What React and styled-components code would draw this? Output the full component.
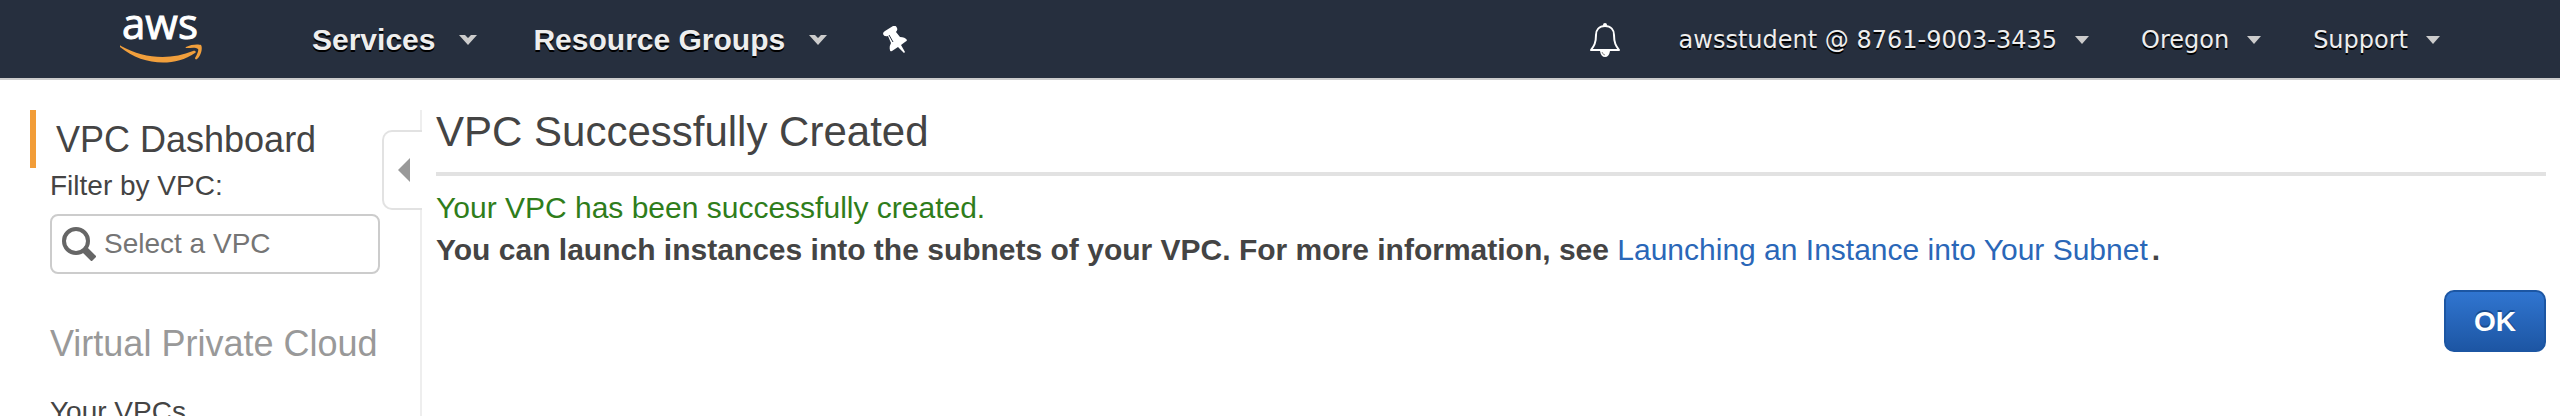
import React from "react";
import styled, { createGlobalStyle } from "styled-components";

const GlobalStyle = createGlobalStyle`
  * { box-sizing: border-box; }
  body {
    margin: 0;
    background: #fff;
    color: #444;
    font-family: "Liberation Sans", Arial, sans-serif;
    font-size: 28px;
    line-height: 36px;
  }
  button, input { font: inherit; color: inherit; }
`;

const Page = styled.div`
  height: 100vh;
  overflow: hidden;
  display: flex;
  flex-direction: column;
`;

const Header = styled.header`
  flex: none;
  display: flex;
  align-items: center;
  justify-content: space-between;
  height: 80px;
  padding: 2px 120px 0;
  background: #262f3e;
  border-bottom: 2px solid #ccc;
`;

const Nav = styled.nav`
  display: flex;
  align-items: center;
`;

const HomeLink = styled.a`
  display: flex;
  margin-right: 108px;
`;

const MenuButton = styled.button`
  display: flex;
  align-items: center;
  gap: ${(p) => (p.$primary ? "24px" : "18px")};
  margin-right: ${(p) => (p.$primary ? "56px" : "0")};
  padding: 0;
  border: 0;
  background: none;
  color: #eee;
  text-shadow: 0 2px 0 #000;
  white-space: nowrap;
  font-family: ${(p) => (p.$primary ? "inherit" : '"DejaVu Sans", Verdana, sans-serif')};
  font-size: ${(p) => (p.$primary ? "30px" : "24px")};
  font-weight: ${(p) => (p.$primary ? "bold" : "normal")};
`;

const Account = styled(Nav)`
  gap: 52px;
`;

const IconButton = styled.button`
  display: flex;
  padding: 0;
  border: 0;
  background: none;
`;

const BellButton = styled(IconButton)`
  margin-right: 6px;
`;

const Body = styled.div`
  flex: 1 0 auto;
  display: flex;
  padding: 30px 14px 0 30px;
`;

const Sidebar = styled.aside`
  flex: none;
  width: 352px;
`;

const DashboardLink = styled.a`
  display: block;
  border-left: 6px solid #f29d38;
  padding: 2px 0 0 20px;
  color: inherit;
  font-size: 36px;
  line-height: 56px;
  text-decoration: none;
`;

const SideGroup = styled.div`
  padding-left: 20px;
`;

const FilterLabel = styled.label`
  display: block;
`;

const SearchBox = styled.div`
  display: flex;
  align-items: center;
  gap: 8px;
  width: 330px;
  height: 60px;
  margin-top: 10px;
  padding: 0 10px;
  border: 2px solid #ccc;
  border-radius: 8px;
`;

const SearchInput = styled.input`
  flex: 1;
  min-width: 0;
  padding: 0;
  border: 0;
  outline: 0;
  background: none;
  &::placeholder { color: #757575; opacity: 1; }
`;

const SectionTitle = styled.h2`
  margin: 48px 0 28px;
  color: #999;
  font-size: 36px;
  font-weight: normal;
  line-height: 44px;
  white-space: nowrap;
`;

const SideLink = styled.a`
  display: block;
  color: inherit;
  text-decoration: none;
`;

const Divider = styled.div`
  flex: none;
  display: flex;
  flex-direction: column;
  align-items: flex-end;
  width: 40px;
  &::before, &::after {
    content: "";
    width: 2px;
    background: #eee;
  }
  &::before { height: 20px; }
  &::after { flex: 1; }
`;

const CollapseButton = styled.button`
  display: flex;
  align-items: center;
  width: 40px;
  height: 80px;
  padding: 0 0 0 14px;
  border: 2px solid #e2e2e2;
  border-right: 0;
  border-radius: 10px 0 0 10px;
  background: #fff;
`;

const Main = styled.main`
  flex: 1;
  min-width: 0;
  margin-left: 14px;
  font-size: 30px;
  line-height: 42px;
`;

const Title = styled.h1`
  margin: 0 0 11px;
  padding-bottom: 18px;
  border-bottom: 4px solid #e2e2e2;
  font-size: 42px;
  font-weight: normal;
  line-height: 44px;
`;

const Message = styled.p`
  margin: 0;
  color: ${(p) => (p.$success ? "#2f7d1b" : "inherit")};
  font-weight: ${(p) => (p.$success ? "normal" : "bold")};
`;

const DocLink = styled.a`
  padding-right: 4px;
  color: #2a67b8;
  font-weight: normal;
  text-decoration: none;
`;

const Actions = styled.div`
  display: flex;
  justify-content: flex-end;
  margin-top: 19px;
`;

const PrimaryButton = styled.button`
  width: 102px;
  height: 62px;
  padding: 2px 0 0;
  border: 2px solid #1c56a3;
  border-radius: 10px;
  background: linear-gradient(#3075d0, #1d56a4);
  color: #fff;
  font-size: 28px;
  font-weight: bold;
  text-shadow: 0 -2px 0 #194b8f;
`;

const AwsLogo = () => (
  <svg width="84" height="76" viewBox="0 0 84 76" role="img" aria-label="AWS">
    <text x="2" y="37" fill="#fff" stroke="#fff" strokeWidth="1" fontFamily="Open Sans, sans-serif" fontSize="42" fontWeight="500">aws</text>
    <g fill="#f19f3c" transform="translate(0 11)">
      <path d="M1 33C24 46 51 47 73 38C75 37 77 39 75 40C53 55 22 52 0 34C-1 33 0 32 1 33Z" />
      <path d="M66 34C71 31 79 31 81 32C83 35 81 43 77 46C76 47 75 46 75 45C77 42 79 37 78 36C76 34 71 35 67 35C66 35 65 35 66 34Z" />
    </g>
  </svg>
);

const Caret = ({ small }) => (
  <svg width={small ? 14 : 18} height={small ? 8 : 10} viewBox="0 0 18 10" preserveAspectRatio="none" aria-hidden="true">
    <path fill="#ccc" d="M0 0H6L9 3L12 0H18L9 10Z" />
    {small && <path fill="#ccc" d="M5 0H13L9 5Z" />}
  </svg>
);

const Pin = () => (
  <svg width="26" height="28" viewBox="0 0 26 28" aria-hidden="true">
    <path fill="#fff" d="M0 8Q0 6 2 5L10 0Q13 -1 14 2Q15 4 13 6L17 11Q22 11 24 14Q24 15 22 16L18 19L22 26L21 27L15 21L9 25Q7 26 7 24Q6 21 8 17L5 10Q1 11 0 8Z" />
    <path stroke="#262f3e" strokeWidth="1" d="M6 9L10 16" />
  </svg>
);

const Bell = () => (
  <svg width="32" height="34" viewBox="0 0 32 34" fill="none" aria-hidden="true">
    <circle cx="16" cy="2" r="2" fill="#fff" />
    <path stroke="#fff" strokeWidth="2" strokeLinejoin="round" d="M16 3C10 3 7 7 7 12C7 20 5 23 2 27H30C27 23 25 20 25 12C25 7 22 3 16 3Z" />
    <path fill="#fff" d="M11 28H21Q20 34 16 34Q12 34 11 28Z" />
    <path stroke="#888" strokeWidth="1" d="M13 29Q14 32 16 32" />
  </svg>
);

const SearchIcon = () => (
  <svg width="34" height="34" viewBox="0 0 34 34" fill="none" stroke="#666" aria-hidden="true">
    <circle cx="14" cy="14" r="12" strokeWidth="4" />
    <path strokeWidth="7" d="M22 22L32 32" />
  </svg>
);

const CollapseIcon = () => (
  <svg width="12" height="24" viewBox="0 0 12 24" aria-hidden="true">
    <path fill="#999" d="M12 0V24L0 12Z" />
  </svg>
);

export default function App() {
  return (
    <Page>
      <GlobalStyle />
      <Header>
        <Nav aria-label="Services">
          <HomeLink href="#"><AwsLogo /></HomeLink>
          <MenuButton $primary>Services <Caret /></MenuButton>
          <MenuButton $primary>Resource Groups <Caret /></MenuButton>
          <IconButton aria-label="Pin shortcuts"><Pin /></IconButton>
        </Nav>
        <Account aria-label="Account">
          <BellButton aria-label="Notifications"><Bell /></BellButton>
          <MenuButton>awsstudent @ 8761-9003-3435 <Caret small /></MenuButton>
          <MenuButton>Oregon <Caret small /></MenuButton>
          <MenuButton>Support <Caret small /></MenuButton>
        </Account>
      </Header>
      <Body>
        <Sidebar>
          <DashboardLink href="#">VPC Dashboard</DashboardLink>
          <SideGroup>
            <FilterLabel htmlFor="vpc-filter">Filter by VPC:</FilterLabel>
            <SearchBox>
              <SearchIcon />
              <SearchInput id="vpc-filter" type="text" placeholder="Select a VPC" />
            </SearchBox>
            <SectionTitle>Virtual Private Cloud</SectionTitle>
            <SideLink href="#">Your VPCs</SideLink>
          </SideGroup>
        </Sidebar>
        <Divider>
          <CollapseButton aria-label="Collapse sidebar"><CollapseIcon /></CollapseButton>
        </Divider>
        <Main>
          <Title>VPC Successfully Created</Title>
          <Message $success>Your VPC has been successfully created.</Message>
          <Message>
            You can launch instances into the subnets of your VPC. For more information, see{" "}
            <DocLink href="#">Launching an Instance into Your Subnet</DocLink>.
          </Message>
          <Actions><PrimaryButton>OK</PrimaryButton></Actions>
        </Main>
      </Body>
    </Page>
  );
}
